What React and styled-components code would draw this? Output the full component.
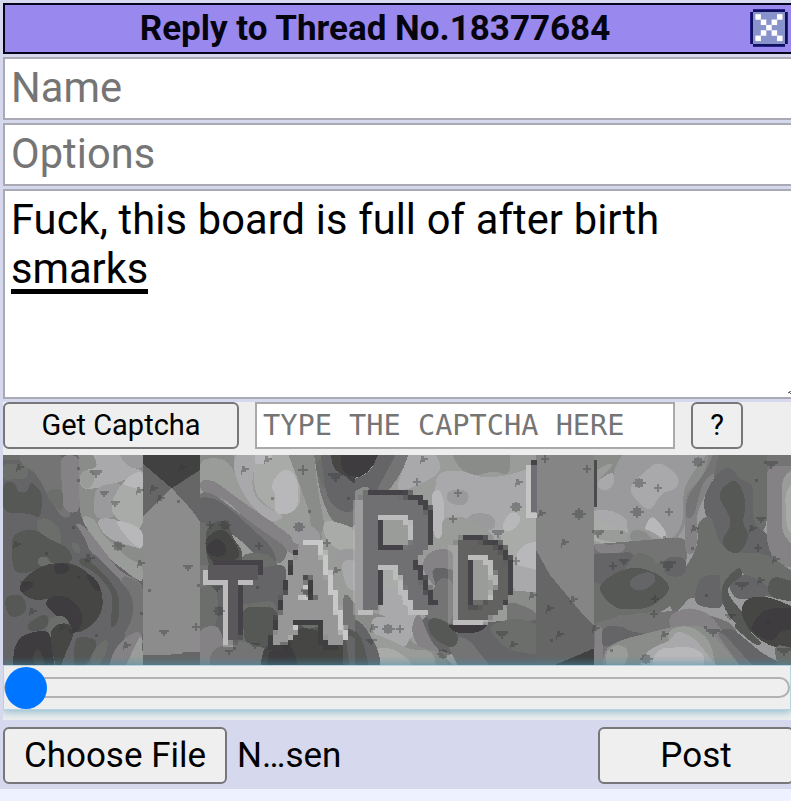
import React from "react";
import styled, { createGlobalStyle, css } from "styled-components";

const Global = createGlobalStyle`
  html, body { margin: 0; background: #eef1ff; overflow: hidden; }
  * { box-sizing: border-box; }
  body, input, textarea, button { font-family: Roboto, "Liberation Sans", sans-serif; }
`;

const Panel = styled.form`
  width: 791px;
  height: 789px;
  padding: 3px 0 0 3px;
  background: #d6d9ee;
  overflow: hidden;
  display: flex;
  flex-direction: column;
  align-items: flex-start;
`;

const Header = styled.header`
  width: 792px;
  height: 51px;
  flex: none;
  margin-bottom: 3px;
  border: 2px solid #05041c;
  background: #9988ee;
  display: flex;
  align-items: center;
  color: #05040f;
`;

const Title = styled.h1`
  flex: 1;
  margin: 0;
  padding-right: 5px;
  text-align: center;
  font-size: 35px;
  line-height: 44px;
  font-weight: 700;
  white-space: nowrap;
`;

const CloseButton = styled.button`
  width: 38px;
  height: 38px;
  padding: 0;
  margin: 0 5px 1px 0;
  border: 0;
  background: none;
  svg { display: block; }
`;

const fieldBox = css`
  display: block;
  flex: none;
  margin: 0;
  border: 2px solid #a9aab3;
  border-radius: 0;
  background: #fff;
  outline: none;
  &::placeholder { color: #757575; opacity: 1; }
`;

const Field = styled.input`
  ${fieldBox}
  width: 792px;
  height: 63px;
  margin-bottom: 3px;
  padding: 0 6px 3px;
  font-size: 41.6px;
  letter-spacing: 0.05px;
`;

const Comment = styled.div`
  ${fieldBox}
  position: relative;
  width: 792px;
  height: 210px;
  margin-bottom: 3px;
  padding: 4px 6px;
  font-size: 41.6px;
  line-height: 49px;
  letter-spacing: 0.08px;
  word-spacing: 0.3px;
  color: #000;
  white-space: pre-line;
`;

const Composing = styled.span`
  display: inline-block;
  height: 50px;
  line-height: 49px;
  letter-spacing: 0;
  vertical-align: top;
  border-bottom: 5px solid #000;
`;

const Grip = styled.svg`
  position: absolute;
  right: 1px;
  bottom: 2px;
`;

const Captcha = styled.section`
  width: 788px;
  height: 318px;
  flex: none;
  margin-bottom: 7px;
  background: #eee;
`;

const CaptchaBar = styled.div`
  display: flex;
  height: 53px;
`;

const Button = styled.button`
  flex: none;
  width: ${(p) => p.$w}px;
  height: ${(p) => p.$h}px;
  margin: 0 ${(p) => p.$gap || 0}px 0 0;
  padding: 0 0 ${(p) => p.$lift || 0}px;
  border: 2px solid #76767b;
  border-radius: 6px;
  background: #efefef;
  color: #000;
  font-size: ${(p) => p.$size}px;
  white-space: nowrap;
`;

const CaptchaInput = styled.input`
  ${fieldBox}
  width: 420px;
  height: 47px;
  margin-right: 16px;
  padding: 0 6px 2px;
  border-color: #aaa;
  font-family: "DejaVu Sans Mono", monospace;
  font-size: 28.6px;
`;

const Picture = styled.svg`
  display: block;
  width: 788px;
  height: 210px;
  overflow: visible;
`;

const Glyph = styled.text`
  font-family: "Liberation Sans", sans-serif;
  font-weight: 700;
  font-size: 100px;
`;

const SliderBox = styled.div`
  position: relative;
  width: 788px;
  height: 45px;
  border: 1px solid #b7d3e2;
  background: #eee;
  box-shadow: 0 0 9px 1px rgba(65, 150, 180, 0.7);
  clip-path: inset(-8px 0 -10px 0);
  display: flex;
  align-items: center;
`;

const Track = styled.div`
  width: 786px;
  height: 21px;
  border: 2px solid #b2b2b2;
  border-radius: 11px;
  background: #efefef;
  display: flex;
  align-items: center;
`;

const Thumb = styled.div`
  width: 42px;
  height: 42px;
  flex: none;
  margin-left: -1.5px;
  border-radius: 50%;
  background: #0075ff;
`;

const Footer = styled.footer`
  width: 800px;
  display: flex;
  align-items: center;
`;

const FileName = styled.span`
  width: 361px;
  font-size: 35px;
  line-height: 52px;
  color: #000;
`;

const CloseIcon = () => (
  <svg width="38" height="38" viewBox="0 0 38 38">
    <path d="M3 0H35V3H38V35H35V38H3V35H0V3H3Z" fill="#28228a" />
    <path d="M3 1H35V3H37V35H35V37H3V35H1V3H3Z" fill="#10105e" />
    <rect x="3" y="3" width="32" height="32" fill="#8993cb" />
    {[0, 1, 2, 3, 4].flatMap((i) =>
      (i === 2 ? [2] : [i, 4 - i]).map((j) => (
        <rect key={`${i}-${j}`} x={5.4 + j * 5.4} y={5.2 + i * 5.35} width="5.5" height="5.5" fill="#fff" />
      ))
    )}
  </svg>
);

// Shades of the camouflage, keyed by letter: k darkest, w lightest.
const SHADE = {
  k: "#3e3c3e", j: "#464745", d: "#565855", e: "#656466", f: "#6c6e6b",
  g: "#757475", h: "#848284", i: "#8a8c89", m: "#9a999b", n: "#9a9c99",
  p: "#a9a8aa", q: "#a9aba8", w: "#b8b7b9",
};

// Patches are listed as "shade x,y x,y ..." at three units to a pixel.
const LEFT = [
  "e 0,0 430,0 430,650 0,650",
  "f 0,30 80,30 130,0 0,0", "g 60,10 190,10 185,100 220,190 190,210 140,130 110,70 60,40",
  "f 0,40 90,45 80,90 40,85 9,95", "h 180,15 240,15 240,190 190,185",
  "d 9,95 45,95 55,130 85,125 90,90 130,130 120,210 95,190 9,190",
  "f 130,125 190,110 190,185 170,175", "i 235,0 430,0 430,395 400,385 350,340 270,240 240,200",
  "m 320,0 430,0 430,60 390,50 355,40", "p 270,0 350,0 380,50 430,60 430,80 380,85 330,110 240,120 240,60 300,55",
  "n 240,60 290,60 275,120 240,110", "m 285,110 370,95 370,160 335,210 280,205",
  "q 430,60 430,230 400,240 335,195 335,150 365,100 400,70", "w 430,60 430,125 395,110 365,105 390,75",
  "n 240,195 285,205 300,245 390,330 430,345 430,400 400,380 330,330 265,245",
  "p 290,205 345,205 380,230 430,235 430,300 400,290 340,275 300,240", "w 340,205 430,235 430,305 385,270",
  "h 230,215 260,235 360,365 430,400 430,470 400,440 340,365 270,310 220,240",
  "g 360,375 400,385 430,410 430,560 380,645 320,645 380,560",
  "e 205,215 225,215 280,310 350,380 400,440 400,505 350,590 275,645 205,645 250,570 330,470 290,380 200,290",
  "f 110,205 150,205 185,245 180,295 145,265 110,245", "d 35,250 105,235 150,270 210,295 220,340 150,340 85,370 45,370 35,330",
  "f 210,275 235,280 245,310 225,310", "h 250,250 300,290 300,320 270,310",
  "d 250,315 330,390 360,440 355,520 330,540 340,430 285,365 230,340",
  "f 115,320 145,320 150,340 180,340 180,350 110,350", "j 60,400 90,370 130,345 200,335 250,355 305,410 310,480 275,530 220,555 190,490 160,440 110,455 60,430",
  "k 160,340 210,340 205,370 165,375", "k 255,370 275,375 300,405 300,430 275,410", "k 60,405 75,395 105,395 90,420 60,430",
  "d 10,440 60,430 80,460 75,495 25,505", "e 80,455 135,480 170,510 85,510", "k 130,460 160,435 205,440 245,480 250,520 220,560 200,510 170,500",
  "f 145,510 170,495 200,500 220,550 195,600 190,645 160,645 140,550", "d 75,525 140,485 150,530 95,550",
  "k 40,600 60,560 100,545 150,540 165,660 40,660", "j 100,610 115,590 140,645 100,645",
  "j 150,530 205,515 225,550 200,600 180,660 170,660 155,600", "d 225,555 300,570 250,660 220,660",
  "f 275,605 320,560 325,600 290,660 270,660", "h 385,555 425,540 430,600 370,660 325,660 340,600",
  "n 425,545 430,660 370,660 400,600",
];
const STRIP = [
  "b 428,0 600,0 600,650 428,650", "c 428,0 600,0 600,215 575,180 515,115 428,200", "a 428,0 600,0 600,60 515,115 428,40",
  "c 428,615 545,613 550,606 600,606 600,650 428,650",
];
const MIDDLE = [
  "n 30,0 750,0 750,650 30,650", "i 30,0 125,0 150,80 180,140 130,130 90,75 30,60",
  "n 30,25 110,25 150,100 220,165 260,200 190,190 90,100 30,85", "p 150,0 210,0 190,60 185,120 215,165 290,200 240,220 170,150 135,80 130,30",
  "q 195,0 290,0 330,70 330,180 260,190 200,140 190,90", "w 270,60 305,60 325,100 325,170 295,195 250,190 260,135 240,110",
  "w 200,0 255,0 235,40 190,45", "i 290,0 370,0 385,130 405,230 390,280 365,270 360,190 320,80",
  "g 370,0 600,0 600,90 500,130 500,235 450,230 420,205 390,130", "f 370,30 420,30 460,90 440,130 400,120",
  "e 390,0 560,0 540,60 500,150 490,190 440,180 410,140", "j 420,0 510,0 530,70 500,110 465,75 430,60",
  "k 450,0 570,0 540,45 490,85 455,65",
  "n 390,230 500,235 500,300 400,290",
  "h 30,90 70,90 150,150 280,240 340,290 310,320 260,275 180,220 110,150 30,125",
  "g 30,125 70,130 180,215 300,300 270,350 180,300 120,220 30,150", "e 10,145 70,140 120,175 245,290 265,340 220,340 130,250 10,225",
  "f 10,215 60,220 80,340 40,380 10,360", "d 45,240 80,210 115,215 130,270 160,300 150,370 70,365 50,330", "j 40,265 100,230 145,290 150,330 60,340", "k 45,290 80,260 110,285 105,320 60,320",
  "f 150,310 240,310 285,380 260,450 170,440", "g 10,350 65,340 130,380 120,440 60,470 10,440",
  "e 50,380 290,340 270,660 50,660", "f 10,420 80,400 85,500 60,570 10,580", "h 20,540 85,520 105,590 60,660 20,660",
  "f 110,470 260,450 260,620 130,620", "d 155,470 260,470 275,600 165,590", "g 60,600 150,570 240,600 220,660 60,660",
  "q 400,205 500,235 500,310 440,300 400,260", "m 430,300 510,295 510,420 460,360", "p 450,330 510,330 510,420 470,420",
  "m 310,220 360,220 400,260 370,290 300,280", "g 305,370 400,350 420,445 300,445",
  "d 290,455 430,455 430,590 290,590", "f 345,480 405,470 400,530 330,540", "j 220,590 330,530 400,545 480,590 505,660 210,660",
  "k 235,600 300,575 330,660 230,660", "g 460,420 520,490 610,600 610,660 540,660 460,550",
  "d 460,525 520,560 580,660 460,660", "e 465,545 530,590 560,660 480,660",
];
const RIGHT_MIDDLE = [
  "n 0,0 660,0 660,660 0,660",
  "k 0,0 105,0 75,40 40,80 0,85", "e 90,0 145,0 140,60 80,130 0,130 0,90 60,70",
  "g 145,0 190,0 140,90 110,130 75,130", "p 180,0 250,0 280,60 220,100 150,125 140,110",
  "i 300,0 480,0 480,80 430,60 380,80 330,60", "p 260,65 335,60 400,85 480,75 550,50 600,190 500,210 430,280 320,260 250,190",
  "w 245,120 275,120 285,180 275,270 250,260",
  "m 360,190 430,190 440,240 380,240 350,215", "m 290,120 360,120 350,170 290,160", "q 500,170 600,180 560,250 580,450 490,380 445,250",
  "w 480,180 520,200 490,245 450,240", "w 520,280 600,270 600,350 540,380 490,330",
  "n 275,200 350,200 430,250 440,290 310,280 275,350",
  "i 0,130 60,100 60,500 0,500",
  "q 100,300 200,300 200,490 100,500", "p 100,410 170,430 210,520 175,580 80,540", "w 140,360 160,360 160,430 200,440 200,480 160,470",
  "h 240,300 310,295 310,400 260,420 210,350", "e 240,350 325,360 330,620 230,590 205,510 280,480",
  "g 270,380 310,390 310,500 290,540 210,490",
  "p 480,340 600,370 600,440 490,430", "i 470,420 600,430 600,510 460,480", "g 470,450 555,480 600,540 470,540",
  "h 205,480 240,570 320,660 240,660 180,540",
  "e 240,520 600,510 600,660 350,660", "f 410,530 500,500 600,540 600,620 470,600", "g 280,560 350,560 430,660 330,660",
  "d 230,500 290,510 330,560 310,600 240,560",
  "k 285,520 420,520 390,548 320,552",
  "i 0,490 100,490 200,590 280,610 300,660 130,660 50,570", "p 60,500 150,500 185,560 160,600 70,560",
  "n 40,540 100,560 180,600 250,600 260,660 50,660", "q 60,600 120,590 180,630 190,660 60,660",
  "e 0,500 40,520 90,610 90,660 0,660", "d 0,530 35,560 60,660 0,660",
];
const GUTTER = ["a2 48,0 222,0 222,650 48,650", "c 48,300 90,375 190,495 222,525 222,650 48,650", "a 105,645 222,595 222,650"];
const RIGHT = [
  "m 222,0 813,0 813,650 222,650", "i 222,0 315,0 280,60 285,80 225,90", "n 225,60 280,35 270,60 225,95",
  "p 230,95 280,60 285,100 260,125 235,115", "p 415,30 480,80 470,120 425,125 390,190 330,130 335,100",
  "w 395,190 440,245 440,275 390,240 370,240", "q 210,180 280,180 325,215 320,285 210,275", "p 225,180 290,185 325,210 315,240 225,210",
  "i 330,240 375,240 400,275 465,265 490,215 490,120 510,80 570,0 600,0 570,85 500,145 495,240 450,280 330,280",
  "n 225,240 325,240 320,280 230,270", "g 200,285 500,260 500,350 460,430 200,380", "h 215,280 270,285 325,280 300,315 240,315", "h 495,130 550,80 570,0 620,0 530,190 530,310 495,315",
  "g 585,0 840,0 840,190 740,250 740,160 700,60 640,30 550,90 520,205 495,205 500,140 560,60",
  "f 600,0 740,0 740,240 690,260 680,330 620,340 610,450 510,440 450,480 430,440 500,350 535,285 530,210 590,190 580,75",
  "e 550,140 590,70 630,45 660,90 700,100 700,220 740,250 810,330 720,370 660,300 600,290 575,200 555,200",
  "d 590,130 640,85 665,110 680,170 665,220 690,250 665,310 630,310 600,275 640,220", "h 740,50 840,45 840,350 770,350 740,280",
  "n 785,80 840,45 840,310 785,250", "q 795,120 840,80 840,280 800,240",
  "f 200,310 335,310 405,345 475,330 510,400 440,480 350,510 200,520", "e 200,315 350,305 320,350 270,410 200,390",
  "d 240,400 300,360 360,350 430,380 455,420 390,475 290,480 240,430", "e 330,385 390,360 415,390 370,425 330,415",
  "f 355,300 410,330 400,350 320,345", "e 430,320 500,320 500,380 430,380", "f 440,420 490,380 535,360 520,430 460,500",
  "e 535,380 610,370 610,480 520,465", "f 600,310 740,310 840,380 840,460 700,430 660,350 600,440",
  "e 620,380 680,370 750,410 750,440 640,450",
  "d 605,400 660,345 670,380 630,400 620,430 670,490 720,560 640,520 605,460",
  "d 750,375 840,400 840,460 740,440", "j 665,465 690,440 750,440 840,480 840,610 740,585 690,545 665,500",
  "k 735,475 840,475 840,540 780,540 760,580 690,545 700,515", "g 200,525 340,490 520,480 640,520 700,660 200,660",
  "h 225,525 250,530 250,660 222,660", "e 245,525 310,530 390,555 300,570 245,600", "g 280,490 340,500 390,550 320,545", "h 440,500 500,470 570,490 610,550 700,660 640,660 560,570 460,550",
  "i 250,600 300,570 480,525 560,530 670,660 250,660", "n 255,605 290,580 330,600 310,660 260,660", "n 450,535 510,525 570,570 590,660 510,640 440,570",
  "p 380,600 455,570 470,540 520,560 600,660 355,660", "w 410,595 520,590 560,620 540,660 390,660", "e 590,545 630,530 740,620 840,660 700,660",
  "g 590,550 605,545 710,660 670,660", "d 635,525 660,520 730,580 710,590", "f 760,580 840,600 840,660 775,660",
];

const STRIP_SHADE = { a: "#414141", a2: "#858585", b: "#8c8c8c", c: "#666" };

// Closed outline whose corners are eased, so that neighbouring patches read as blobs.
const blob = (points) => {
  const p = points.split(" ").map((s) => s.split(",").map(Number));
  const toward = (a, b) => {
    const len = Math.hypot(b[0] - a[0], b[1] - a[1]) || 1;
    const t = Math.min(0.5, 32 / len);
    return `${(a[0] + (b[0] - a[0]) * t).toFixed(1)} ${(a[1] + (b[1] - a[1]) * t).toFixed(1)}`;
  };
  return p
    .map((v, i) => {
      if (v[1] <= 0 || v[1] >= 650) return `${i ? "L" : "M"}${v[0]} ${v[1]}`;
      const prev = p[(i + p.length - 1) % p.length];
      const next = p[(i + 1) % p.length];
      return `${i ? "L" : "M"}${toward(v, prev)}Q${v[0]} ${v[1]} ${toward(v, next)}`;
    })
    .join("") + "Z";
};

const Patches = ({ items, x = 0, sharp }) => (
  <g transform={`translate(${x - 3} -5) scale(.33333)`} shapeRendering="crispEdges">
    {items.map((item, i) => {
      const cut = item.indexOf(" ");
      const key = item.slice(0, cut);
      const points = item.slice(cut + 1);
      const fill = SHADE[key] || STRIP_SHADE[key];
      return sharp ? <polygon key={i} points={points} fill={fill} /> : <path key={i} d={blob(points)} fill={fill} />;
    })}
  </g>
);

// Specks: shape, x, y in picture pixels, then a scale.
const SPECKS = [
  ["v", 93, 19, 1.2], ["c", 17, 12, 1], ["v", 101, 39, .9], ["v", 112, 49, .9], ["d", 115, 91, 1.3], ["c", 14, 89, 1],
  ["c", 87, 103, 1.2], ["v", 22, 129, 1], ["c", 30, 156, 1], ["v", 69, 177, 1], ["c", 124, 190, 1], ["c", 60, 172, 1],
  ["c", 138, 108, 1], ["c", 151, 33, 1.1], ["c", 158, 43, 1.1], ["c", 180, 12, 1.1], ["v", 185, 113, 1], ["v", 161, 178, 1],
  ["p", 193, 172, 1], ["c", 137, 35, 1], ["p", 207, 70, 1], ["d", 222, 70, 1.2], ["p", 256, 91, 1], ["c", 242, 14, 1.1],
  ["p", 300, 15, 1.2], ["c", 265, 4, 1], ["d", 296, 72, 1.2], ["p", 324, 88, 1], ["v", 332, 22, 1.5],
  ["v", 304, 138, 1.2], ["d", 216, 156, 1.2], ["v", 214, 134, 1], ["v", 226, 196, 1.3], ["v", 252, 191, 1], ["v", 283, 191, 1.2],
  ["c", 371, 172, 1], ["d", 385, 174, 1.3], ["p", 397, 174, 1], ["v", 368, 187, 1.1], ["c", 334, 115, 1], ["p", 414, 27, 1],
  ["p", 455, 38, 1], ["p", 450, 64, 1], ["c", 421, 4, 1], ["c", 516, 27, 1], ["d", 513, 52, 1.2], ["v", 495, 79, 1.2],
  ["p", 513, 106, 1], ["c", 530, 140, 1], ["v", 499, 180, 1.2], ["c", 511, 189, 1], ["d", 440, 199, 1.3], ["c", 539, 58, 1],
  ["p", 542, 4, 1.1], ["p", 584, 14, 1.1], ["d", 576, 59, 1.4], ["c", 562, 87, 1.1], ["c", 547, 153, 1.1], ["c", 571, 144, 1],
  ["c", 557, 179, 1.1], ["d", 695, 7, 1.3], ["p", 655, 33, 1.1], ["d", 636, 28, 1.3], ["d", 634, 57, 1.4], ["p", 666, 57, 1.1],
  ["v", 768, 10, 1.4], ["c", 692, 73, 1], ["c", 750, 73, 1], ["v", 758, 65, 1], ["p", 755, 93, 1.1], ["c", 773, 104, 1],
  ["v", 595, 79, 1.2], ["p", 610, 111, 1], ["v", 621, 107, 1], ["v", 665, 111, 1.6], ["p", 652, 144, 1], ["p", 651, 159, 1],
  ["v", 739, 131, 1.4], ["c", 758, 125, 1], ["v", 727, 162, 1.1], ["c", 662, 179, 1.1], ["v", 710, 178, 1.4], ["p", 765, 167, 1.1],
  ["d", 643, 204, 1.3], ["v", 781, 197, 1.4], ["c", 593, 173, 1],
];
const SPECK_PATH = {
  p: "M-1-4H1V-1H4V1H1V4H-1V1H-4V-1H-1Z",
  v: "M-5-3H5V-1H3V1H1V3H-1V1H-3V-1H-5Z",
  c: "M-3-3H0V-1H4V1H1V3H-3V5H-4V1H-3Z",
  d: "M-1-4H1V-3H3V-1H5V1H3V3H1V4H-1V3H-3V1H-5V-1H-3V-3H-1Z",
};
const DOTS = [[75, 13], [75, 25], [43, 98], [75, 122], [146, 135], [93, 180], [175, 46], [70, 72], [269, 43], [306, 56], [138, 158], [618, 77], [661, 82], [689, 93], [703, 140], [753, 25], [608, 195], [702, 172], [548, 185], [345, 43], [195, 130], [254, 132]];

const EmbossFilter = ({ id, upper, lower }) => (
  <filter id={id} filterUnits="userSpaceOnUse" x="0" y="0" width="788" height="210" colorInterpolationFilters="sRGB">
    <feFlood x="2" y="2" width="1" height="1" floodColor="#000" result="dot" />
    <feOffset in="dot" dx="0" dy="0" x="0" y="0" width="5" height="5" result="cell" />
    <feTile in="cell" result="grid" x="0" y="0" width="788" height="210" />
    <feComposite in="SourceGraphic" in2="grid" operator="in" />
    <feMorphology operator="dilate" radius="2" result="blocks" />
    <feOffset in="blocks" dx="5" dy="-5" result="up" />
    <feFlood floodColor={upper} />
    <feComposite in2="up" operator="in" result="upper" />
    <feOffset in="blocks" dx="-5" dy="5" result="down" />
    <feFlood floodColor={lower} />
    <feComposite in2="down" operator="in" result="lower" />
    <feMerge>
      <feMergeNode in="upper" />
      <feMergeNode in="lower" />
      <feMergeNode in="blocks" />
    </feMerge>
  </filter>
);

const Challenge = () => (
  <Picture viewBox="0 0 788 210">
    <defs>
      <EmbossFilter id="sunken" upper="#454347" lower="#bcbcbd" />
      <EmbossFilter id="raised" upper="#c8c8c8" lower="#3f3e40" />
      <clipPath id="frame"><rect x="0" y="0" width="788" height="210" /></clipPath>
      <clipPath id="midClip"><rect x="197" y="0" width="180" height="210" /></clipPath>
      <clipPath id="midRightClip"><rect x="352" y="0" width="182" height="210" /></clipPath>
      <clipPath id="leftClip"><rect x="0" y="0" width="140" height="210" /></clipPath>
      <clipPath id="rightClip"><rect x="591" y="0" width="197" height="210" /></clipPath>
    </defs>
    <g clipPath="url(#frame)">
      <g clipPath="url(#leftClip)"><Patches items={LEFT} /></g>
      <Patches items={STRIP} sharp />
      <g clipPath="url(#midClip)"><Patches items={MIDDLE} x={190} /></g>
      <g clipPath="url(#midRightClip)"><Patches items={RIGHT_MIDDLE} x={350} /></g>
      <g clipPath="url(#rightClip)"><Patches items={RIGHT} x={520} /></g>
      <Patches items={GUTTER} x={520} sharp />
    </g>
    <g shapeRendering="crispEdges">
      <path d="M525 10V60H534" fill="none" stroke="#c4c4c4" strokeWidth="5" />
      <rect x="528" y="5" width="6" height="52" fill="#706e72" />
      <rect x="528" y="5" width="6" height="5" fill="#454545" />
      <rect x="591" y="5" width="3" height="47" fill="#4b4b4b" />
    </g>
    <g filter="url(#sunken)">
      <Glyph fill="#5a585b" transform="translate(206 187) scale(.79 1.12)">T</Glyph>
    </g>
    <g filter="url(#raised)">
      <Glyph fill="#979797" stroke="#979797" strokeWidth="2" transform="translate(268 188) scale(1.02 1.4)">A</Glyph>
    </g>
    <g filter="url(#sunken)">
      <Glyph fill="#706f71" transform="translate(350 155) scale(1.14 1.64)">R</Glyph>
      <Glyph fill="#626361" transform="translate(447 165) scale(.86 1.14)">D</Glyph>
    </g>
    <g fill="#343636" fillOpacity=".38" shapeRendering="crispEdges" clipPath="url(#frame)">
      {SPECKS.map(([shape, x, y, k], i) => (
        <path key={i} d={SPECK_PATH[shape]} transform={`translate(${x} ${y}) scale(${k})`} />
      ))}
      {DOTS.map(([x, y], i) => <rect key={i} x={x - 1} y={y - 1} width="3" height="3" />)}
    </g>
  </Picture>
);

export default function App() {
  return (
    <>
      <Global />
      <Panel onSubmit={(e) => e.preventDefault()}>
        <Header>
          <Title>Reply to Thread No.18377684</Title>
          <CloseButton type="button" aria-label="Close"><CloseIcon /></CloseButton>
        </Header>
        <Field placeholder="Name" />
        <Field placeholder="Options" />
        <Comment>
          {"Fuck, this board is full of after birth\n"}
          <Composing>smarks</Composing>
          <Grip width="4" height="4" viewBox="0 0 4 4"><path d="M0 2L3 0M1 1L4 4" stroke="#555" /></Grip>
        </Comment>
        <Captcha>
          <CaptchaBar>
            <Button type="button" $w={236} $h={47} $gap={16} $size={29} $lift={2}>Get Captcha</Button>
            <CaptchaInput placeholder="TYPE THE CAPTCHA HERE" />
            <Button type="button" $w={52} $h={47} $size={29} $lift={2}>?</Button>
          </CaptchaBar>
          <Challenge />
          <SliderBox><Track><Thumb /></Track></SliderBox>
        </Captcha>
        <Footer>
          <Button type="button" $w={224} $h={57} $gap={10} $size={35}>Choose File</Button>
          <FileName>N…sen</FileName>
          <Button $w={196} $h={57} $size={35}>Post</Button>
        </Footer>
      </Panel>
    </>
  );
}
